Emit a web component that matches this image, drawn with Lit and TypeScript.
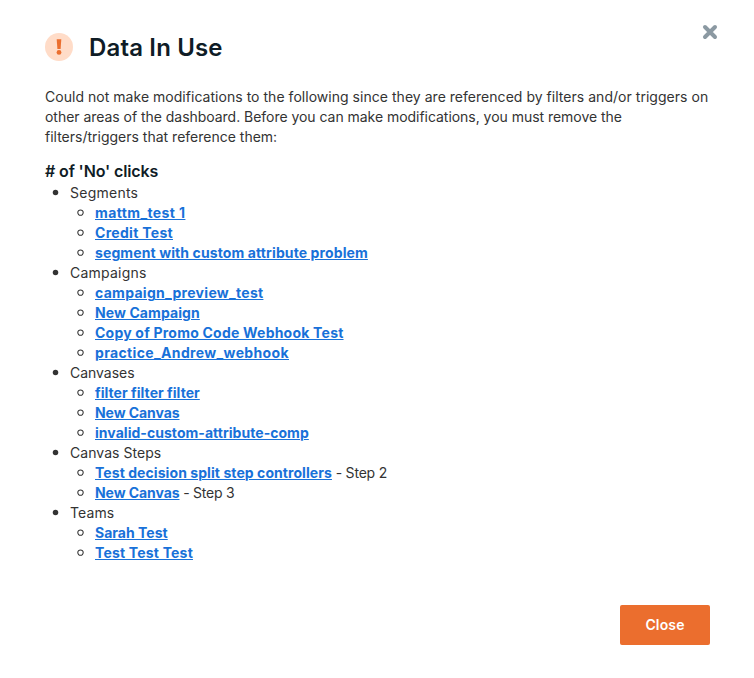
import { LitElement, html, css, nothing } from "lit";
import { customElement } from "lit/decorators.js";

interface Entry { label: string; tracking: number; note?: string; noteTracking?: number }
interface Group { name: string; tracking: number; entries: Entry[] }

const message = [
  { text: "Could not make modifications to the following since they are referenced by filters and/or triggers on", tracking: 0.031 },
  { text: "other areas of the dashboard. Before you can make modifications, you must remove the", tracking: -0.036 },
  { text: "filters/triggers that reference them:", tracking: 0 },
];

const groups: Group[] = [
  { name: "Segments", tracking: 0.25, entries: [
    { label: "mattm_test 1", tracking: 0.39 },
    { label: "Credit Test", tracking: 0.3 },
    { label: "segment with custom attribute problem", tracking: 0.11 } ] },
  { name: "Campaigns", tracking: 0.22, entries: [
    { label: "campaign_preview_test", tracking: 0.29 },
    { label: "New Campaign", tracking: 0.09 },
    { label: "Copy of Promo Code Webhook Test", tracking: 0.22 },
    { label: "practice_Andrew_webhook", tracking: 0.355 } ] },
  { name: "Canvases", tracking: -0.02, entries: [
    { label: "filter filter filter", tracking: 0.03 },
    { label: "New Canvas", tracking: -0.075 },
    { label: "invalid-custom-attribute-comp", tracking: 0.04 } ] },
  { name: "Canvas Steps", tracking: 0.05, entries: [
    { label: "Test decision split step controllers", tracking: 0.07, note: " - Step 2", noteTracking: -0.21 },
    { label: "New Canvas", tracking: -0.075, note: " - Step 3", noteTracking: -0.24 } ] },
  { name: "Teams", tracking: 0.12, entries: [
    { label: "Sarah Test", tracking: 0.02 },
    { label: "Test Test Test", tracking: 0.19 } ] },
];

@customElement("app-root")
export class AppRoot extends LitElement {
  static styles = css`
    :host { display: block; min-height: 678px; background: #fff; color: #333; font: 14px/20px Inter, "Liberation Sans", sans-serif; }
    .dialog { position: relative; box-sizing: border-box; min-height: 678px; padding: 30px 44px 33px 45px; display: flex; flex-direction: column; }
    .header { display: flex; align-items: center; gap: 16px; height: 34px; }
    .title { margin: 2px 0 0; font-size: 24px; line-height: 34px; font-weight: 600; letter-spacing: 0.16px; color: #0f1c26; }
    .dismiss { position: absolute; top: 24px; right: 36px; width: 16px; height: 16px; padding: 0; border: 0; background: none; display: block; }
    .dismiss svg, .alert { display: block; }
    .message { margin: 23px 0 0; }
    .line { display: block; white-space: nowrap; }
    .subject { margin: 13px 0 1px; font-size: 16px; line-height: 22px; font-weight: 600; letter-spacing: -0.14px; color: #0f1c26; }
    ul { margin: 0; padding: 0 0 0 25px; list-style: none; }
    .row { display: flex; align-items: center; height: 20px; white-space: pre; }
    .marker { display: block; flex: none; width: 7px; height: 7px; margin: 0 11px 1px -18px; }
    .bullet { margin-right: 11.2px; margin-left: -18.2px; }
    a { color: #1871d9; font-weight: 700; text-decoration: underline; text-decoration-thickness: 1px; text-underline-offset: 1px; }
    .footer { margin-top: auto; display: flex; justify-content: flex-end; }
    .close { width: 90px; height: 40px; padding: 0; border: 0; border-radius: 2px; background: #eb6e2e; color: #fff; font: 600 14px/20px Inter, sans-serif; letter-spacing: 0.15px; }
  `;

  render() {
    return html`<section class="dialog">
      <header class="header">
        <svg class="alert" width="28" height="28" viewBox="0 0 28 28"><circle cx="14" cy="14" r="14" fill="#ffdcc8"/><path d="M11.7 6.2h4.6l-.7 9.7h-3.2z" fill="#eb6e2e"/><circle cx="14" cy="19.4" r="2.4" fill="#eb6e2e"/></svg>
        <h1 class="title">Data In Use</h1>
      </header>
      <button class="dismiss" aria-label="Dismiss"><svg width="16" height="16" viewBox="0 0 16 16"><path d="M3 3l10 10M13 3L3 13" stroke="#8b99a2" stroke-width="4" stroke-linecap="round"/></svg></button>
      <p class="message">${message.map(m => html`<span class="line" style="letter-spacing:${m.tracking}px">${m.text}</span>`)}</p>
      <h2 class="subject"># of 'No' clicks</h2>
      <ul>${groups.map(g => html`<li>
        <div class="row"><svg class="marker bullet" viewBox="0 0 7 7"><circle cx="3.5" cy="3.6" r="2.75" fill="#333"/></svg><span style="letter-spacing:${g.tracking}px">${g.name}</span></div>
        <ul>${g.entries.map(e => html`<li class="row"><svg class="marker" viewBox="0 0 7 7"><circle cx="3.5" cy="3.6" r="2.7" fill="none" stroke="#333" stroke-width="1.05"/></svg><a style="letter-spacing:${e.tracking}px">${e.label}</a>${e.note ? html`<span style="letter-spacing:${e.noteTracking ?? 0}px">${e.note}</span>` : nothing}</li>`)}</ul>
      </li>`)}</ul>
      <footer class="footer"><button class="close">Close</button></footer>
    </section>`;
  }
}
